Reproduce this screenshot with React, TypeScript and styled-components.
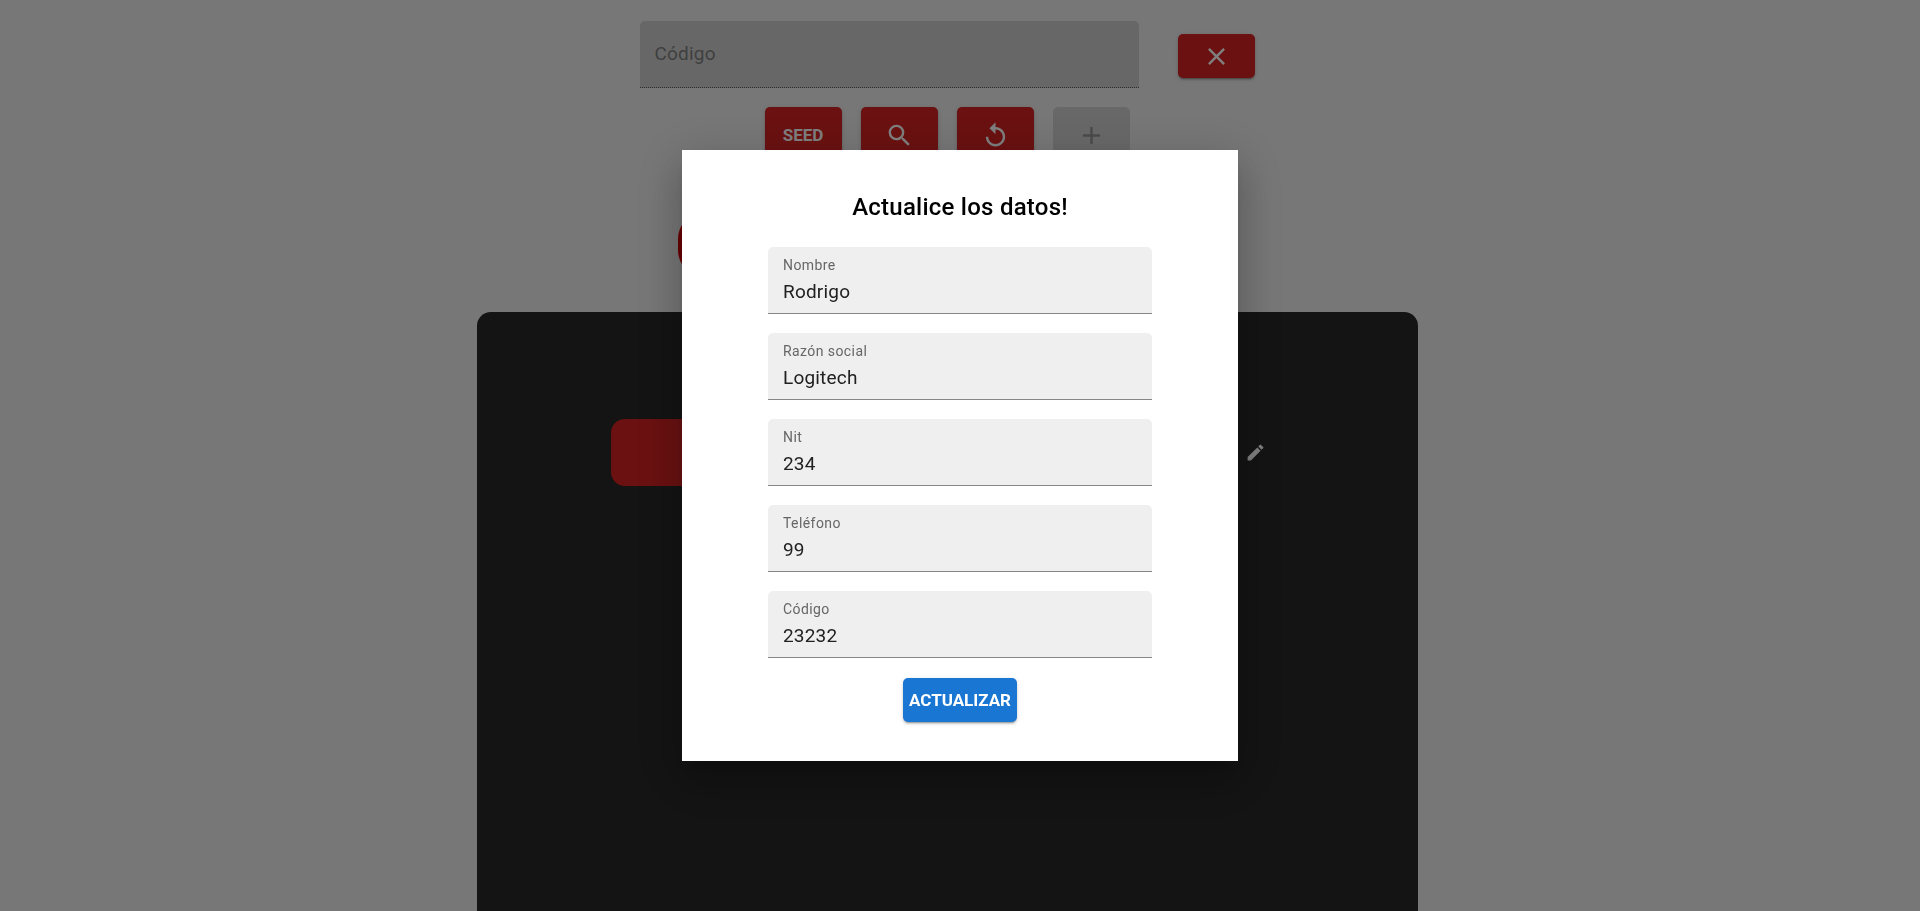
import React from "react";
import styled, { createGlobalStyle } from "styled-components";
import { MdSearch, MdReplay, MdAdd, MdClose, MdEdit } from "react-icons/md";

const GlobalStyle = createGlobalStyle`
  *, *::before, *::after { box-sizing: border-box; }
  body {
    margin: 0;
    height: 100vh;
    overflow: hidden;
    background: #eeeeee;
    font-family: Roboto, "Liberation Sans", sans-serif;
  }
`;

const Page = styled.main`
  display: flex;
  flex-direction: column;
  align-items: center;
  padding: 21px 26px 0 0;
`;

const SearchRow = styled.div`
  display: flex;
  align-items: flex-end;
  gap: 39px;
`;

const Field = styled.div<{ $muted?: boolean }>`
  position: relative;
  width: ${(p) => (p.$muted ? "499px" : "100%")};
  height: 67px;
  border-radius: 5px 5px 0 0;
  background: ${(p) => (p.$muted ? "rgba(0, 0, 0, 0.13)" : "#efefef")};
  border-bottom: 1px ${(p) => (p.$muted ? "dotted #5a5a5a" : "solid #868686")};
`;

const FieldLabel = styled.label<{ $large?: boolean }>`
  position: absolute;
  left: 15px;
  top: ${(p) => (p.$large ? "21px" : "9px")};
  font-size: ${(p) => (p.$large ? "19px" : "14px")};
  line-height: ${(p) => (p.$large ? "24px" : "18px")};
  letter-spacing: ${(p) => (p.$large ? "0.01em" : "0.03em")};
  color: ${(p) => (p.$large ? "#808080" : "#666666")};
  pointer-events: none;
`;

const FieldInput = styled.input`
  width: 100%;
  height: 100%;
  padding: 22px 15px 0;
  border: 0;
  outline: 0;
  background: transparent;
  font-family: inherit;
  font-size: 19px;
  letter-spacing: 0.01em;
  color: #212121;
`;

const Button = styled.button<{ $tone?: "red" | "blue" }>`
  display: flex;
  align-items: center;
  justify-content: center;
  min-width: 77px;
  height: 44px;
  padding: 0 6px;
  border: 0;
  border-radius: 5px;
  background: ${(p) => (p.$tone === "blue" ? "#1976d2" : "#d62222")};
  color: #ffffff;
  font-family: inherit;
  font-size: 17px;
  font-weight: 700;
  box-shadow: 0 3px 1px -2px rgba(0, 0, 0, 0.2), 0 2px 2px rgba(0, 0, 0, 0.14),
    0 1px 5px rgba(0, 0, 0, 0.12);

  &:disabled {
    background: rgba(0, 0, 0, 0.12);
    color: #969696;
    box-shadow: none;
  }
`;

const ClearSlot = styled.div`
  padding-bottom: 10px;
`;

const Actions = styled.div`
  display: flex;
  gap: 19px;
  margin-top: 19px;

  ${Button} {
    height: 56px;
  }
`;

const Pill = styled.div`
  width: 538px;
  height: 67px;
  margin-top: 48px;
  border-radius: 28px;
  background: #d60000;
`;

const Panel = styled.section`
  width: 941px;
  min-height: 640px;
  margin-top: 34px;
  padding: 107px 134px;
  border-radius: 14px;
  background: #282828;
`;

const ClientRow = styled.div`
  display: flex;
  align-items: center;
  padding-right: 18px;
`;

const ClientTag = styled.div`
  width: 600px;
  height: 67px;
  border-radius: 14px;
  background: #d62222;
`;

const EditButton = styled.button`
  display: flex;
  padding: 0;
  margin-left: auto;
  border: 0;
  background: none;
  color: #ffffff;
`;

const Backdrop = styled.div`
  position: fixed;
  inset: 0;
  display: flex;
  align-items: center;
  justify-content: center;
  background: rgba(0, 0, 0, 0.5);
`;

const Dialog = styled.form`
  display: flex;
  flex-direction: column;
  align-items: center;
  gap: 20px;
  width: 556px;
  padding: 41px 86px 39px;
  background: #ffffff;
  box-shadow: 0 11px 15px -7px rgba(0, 0, 0, 0.2), 0 24px 38px 3px rgba(0, 0, 0, 0.14),
    0 9px 46px 8px rgba(0, 0, 0, 0.12);
`;

const Title = styled.h2`
  margin: 0 0 4px;
  font-size: 24px;
  line-height: 32px;
  font-weight: 500;
  letter-spacing: 0.01em;
  color: #000000;
`;

const FieldList = styled.div`
  display: flex;
  flex-direction: column;
  gap: 19px;
  width: 100%;
`;

const fields = [
  { id: "nombre", label: "Nombre", value: "Rodrigo" },
  { id: "razon", label: "Razón social", value: "Logitech" },
  { id: "nit", label: "Nit", value: "234" },
  { id: "telefono", label: "Teléfono", value: "99" },
  { id: "codigo", label: "Código", value: "23232" },
];

export default function App() {
  return (
    <>
      <GlobalStyle />
      <Page>
        <SearchRow>
          <Field $muted>
            <FieldLabel $large htmlFor="buscar">Código</FieldLabel>
            <FieldInput id="buscar" disabled />
          </Field>
          <ClearSlot>
            <Button type="button" aria-label="Limpiar"><MdClose size={29} /></Button>
          </ClearSlot>
        </SearchRow>
        <Actions>
          <Button type="button">SEED</Button>
          <Button type="button" aria-label="Buscar"><MdSearch size={29} /></Button>
          <Button type="button" aria-label="Recargar"><MdReplay size={29} /></Button>
          <Button type="button" aria-label="Agregar" disabled><MdAdd size={29} /></Button>
        </Actions>
        <Pill />
        <Panel>
          <ClientRow>
            <ClientTag />
            <EditButton type="button" aria-label="Editar"><MdEdit size={21} /></EditButton>
          </ClientRow>
        </Panel>
      </Page>
      <Backdrop>
        <Dialog role="dialog" aria-labelledby="titulo">
          <Title id="titulo">Actualice los datos!</Title>
          <FieldList>
            {fields.map((f) => (
              <Field key={f.id}>
                <FieldLabel htmlFor={f.id}>{f.label}</FieldLabel>
                <FieldInput id={f.id} defaultValue={f.value} />
              </Field>
            ))}
          </FieldList>
          <Button type="button" $tone="blue">ACTUALIZAR</Button>
        </Dialog>
      </Backdrop>
    </>
  );
}
